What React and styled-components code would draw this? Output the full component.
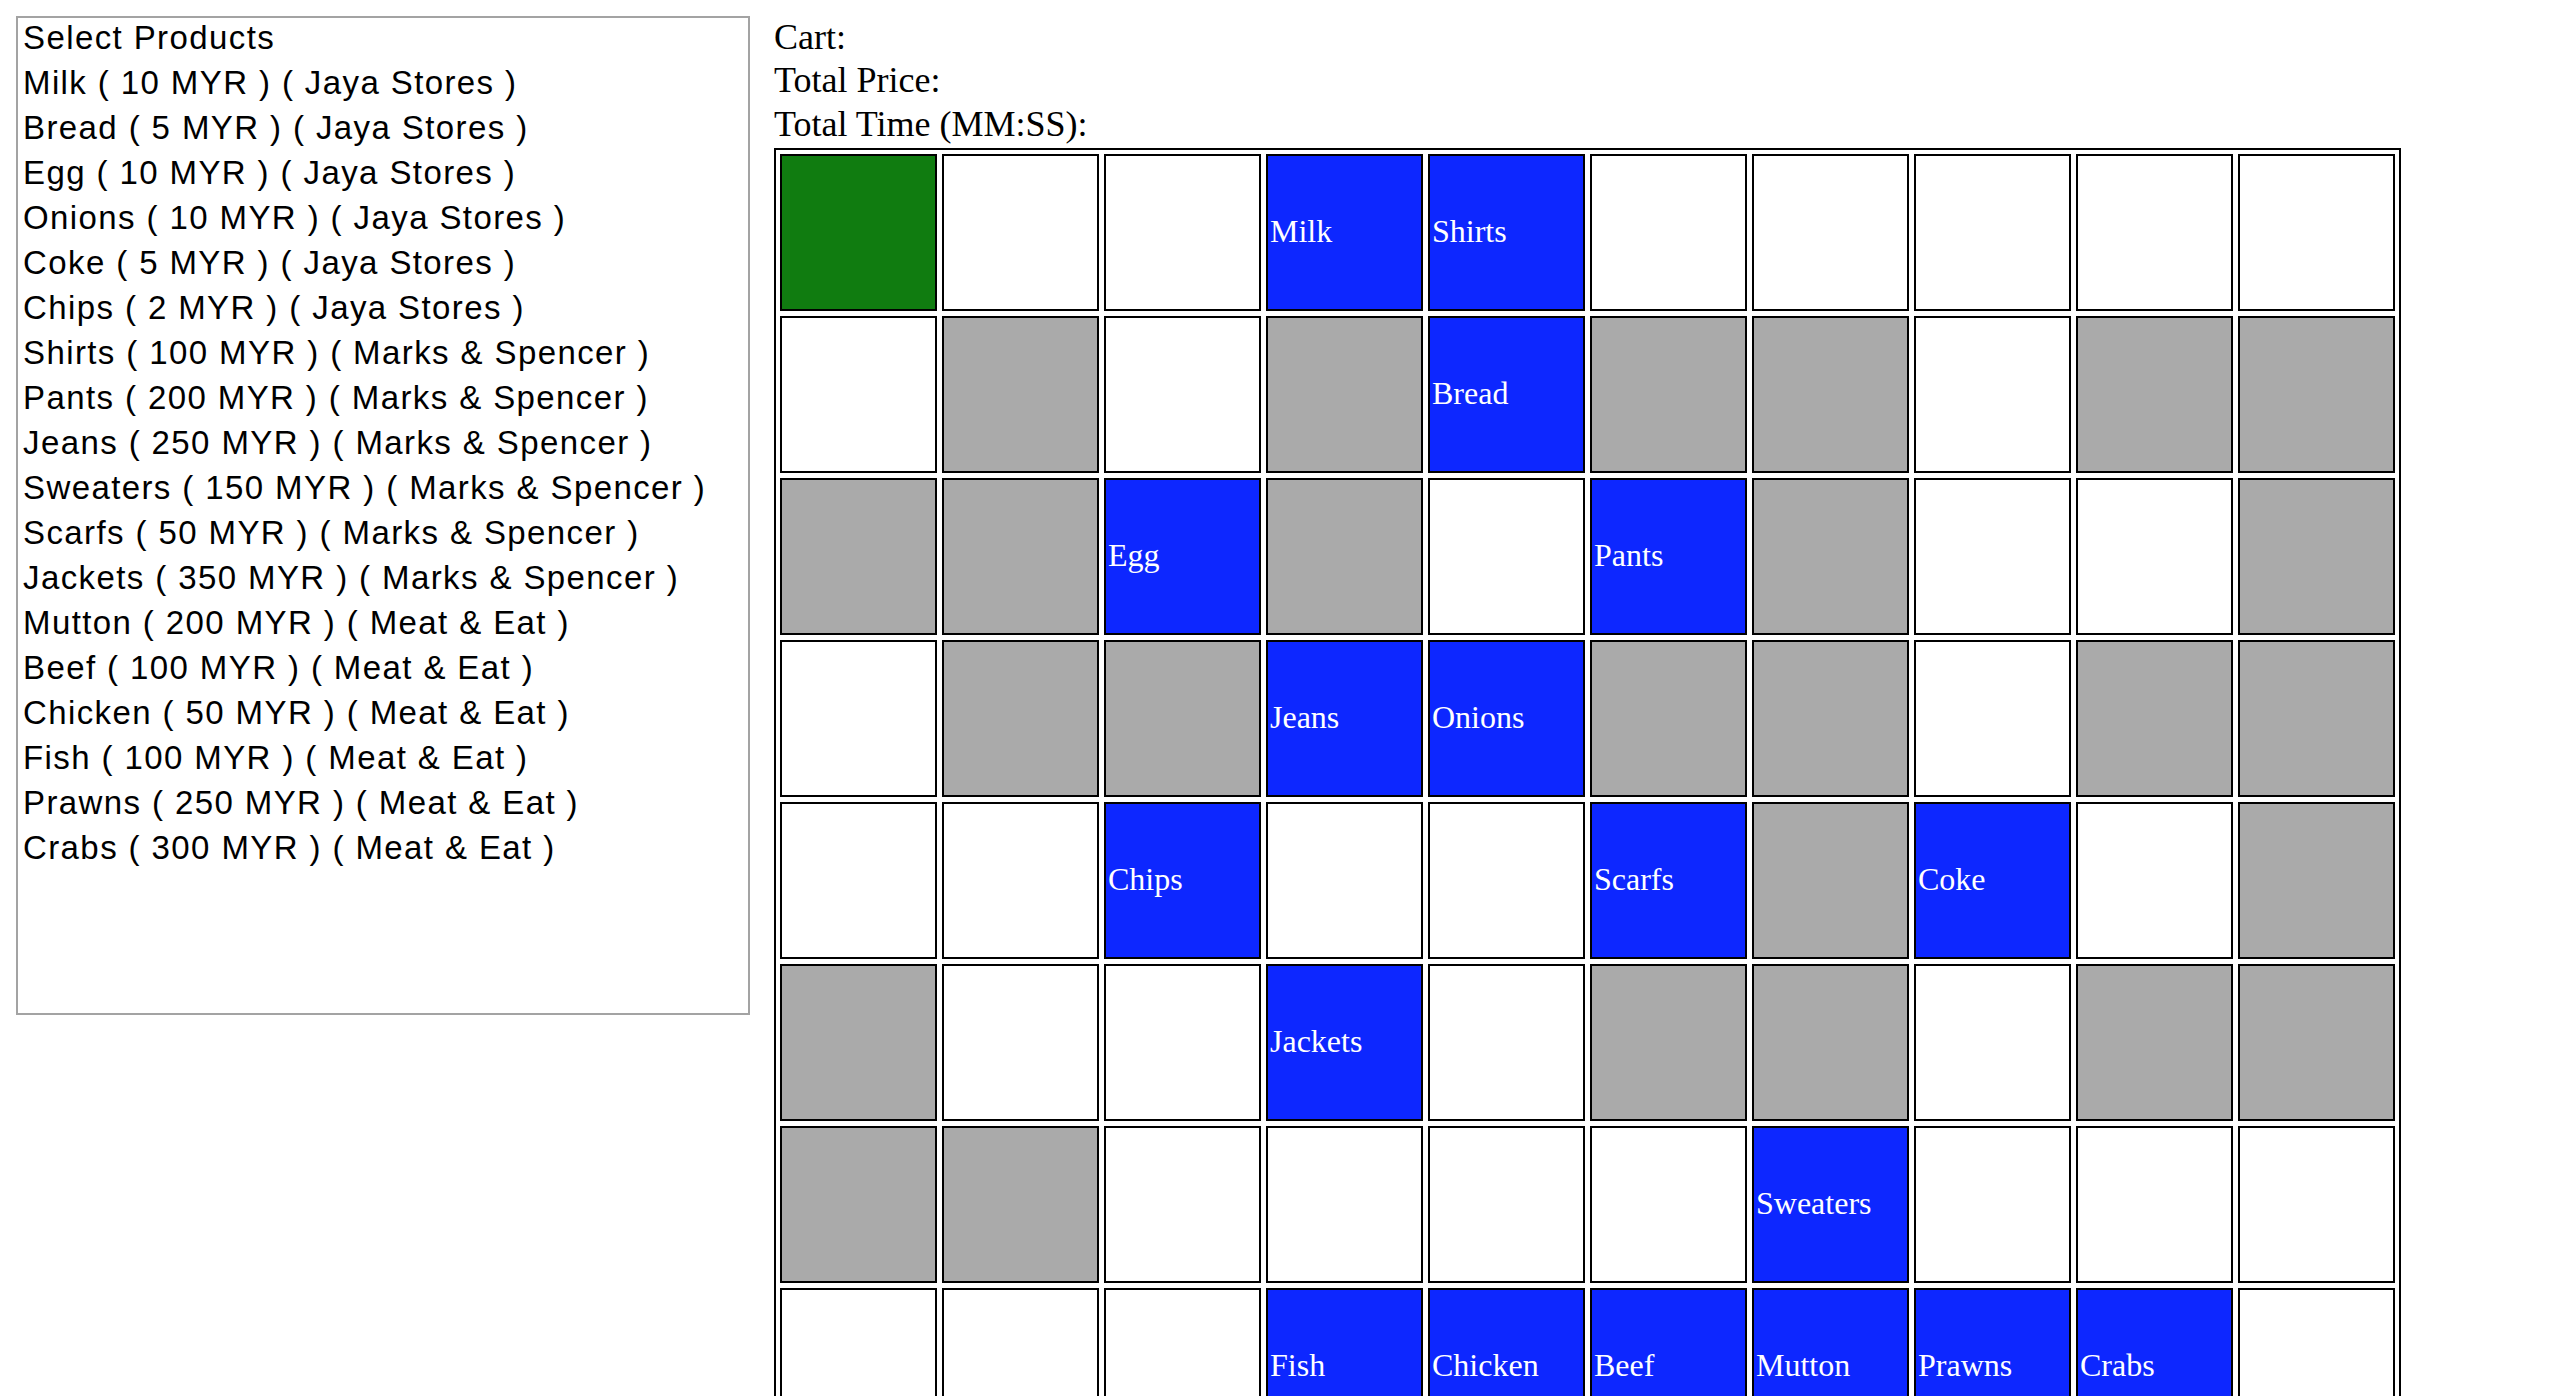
import React from 'react'
import styled, { createGlobalStyle } from 'styled-components'

const GlobalStyle = createGlobalStyle`
html {
    scrollbar-width: none;
}
html::-webkit-scrollbar {
    display: none;
}
body {
    margin: 0;
    background: #fff;
    color: #000;
}
`;

const Page = styled.div`
display: flex;
align-items: flex-start;
gap: 24px;
padding: 16px 0 0 16px;
`;

const ProductList = styled.div`
box-sizing: border-box;
width: 734px;
height: 999px;
flex-shrink: 0;
border: 2px solid #a3a3a3;
padding: 0 5px;
font-family: "Liberation Sans", Arial, sans-serif;
font-size: 33px;
letter-spacing: 1.4px;
overflow: hidden;
`;

const Option = styled.div`
height: 45px;
line-height: 40px;
white-space: nowrap;
`;

const Side = styled.div`
display: flex;
flex-direction: column;
`;

const InfoLine = styled.div`
font-family: "Liberation Serif", "Times New Roman", serif;
font-size: 36px;
line-height: 43.4px;
white-space: nowrap;
`;

const Board = styled.div`
display: grid;
grid-template-columns: repeat(10, 157px);
grid-auto-rows: 157px;
gap: 5px;
padding: 4px;
margin-top: 2px;
border: 2px solid #000;
`;

const cellColors = {
    start: '#107c10',
    empty: '#ffffff',
    wall: '#aaaaaa',
    product: '#0d27ff',
};

const Cell = styled.div`
box-sizing: border-box;
display: flex;
align-items: center;
padding: 0 2px 3px;
border: 2px solid #000;
background: ${props => cellColors[props.kind]};
color: #fff;
font-family: "Liberation Serif", "Times New Roman", serif;
font-size: 32px;
white-space: nowrap;
overflow: hidden;
`;

const products = [
    'Select Products',
    'Milk ( 10 MYR ) ( Jaya Stores )',
    'Bread ( 5 MYR ) ( Jaya Stores )',
    'Egg ( 10 MYR ) ( Jaya Stores )',
    'Onions ( 10 MYR ) ( Jaya Stores )',
    'Coke ( 5 MYR ) ( Jaya Stores )',
    'Chips ( 2 MYR ) ( Jaya Stores )',
    'Shirts ( 100 MYR ) ( Marks & Spencer )',
    'Pants ( 200 MYR ) ( Marks & Spencer )',
    'Jeans ( 250 MYR ) ( Marks & Spencer )',
    'Sweaters ( 150 MYR ) ( Marks & Spencer )',
    'Scarfs ( 50 MYR ) ( Marks & Spencer )',
    'Jackets ( 350 MYR ) ( Marks & Spencer )',
    'Mutton ( 200 MYR ) ( Meat & Eat )',
    'Beef ( 100 MYR ) ( Meat & Eat )',
    'Chicken ( 50 MYR ) ( Meat & Eat )',
    'Fish ( 100 MYR ) ( Meat & Eat )',
    'Prawns ( 250 MYR ) ( Meat & Eat )',
    'Crabs ( 300 MYR ) ( Meat & Eat )',
];

// S = start, . = empty, # = wall, anything else is a product
const map = [
    ['S', '.', '.', 'Milk', 'Shirts', '.', '.', '.', '.', '.'],
    ['.', '#', '.', '#', 'Bread', '#', '#', '.', '#', '#'],
    ['#', '#', 'Egg', '#', '.', 'Pants', '#', '.', '.', '#'],
    ['.', '#', '#', 'Jeans', 'Onions', '#', '#', '.', '#', '#'],
    ['.', '.', 'Chips', '.', '.', 'Scarfs', '#', 'Coke', '.', '#'],
    ['#', '.', '.', 'Jackets', '.', '#', '#', '.', '#', '#'],
    ['#', '#', '.', '.', '.', '.', 'Sweaters', '.', '.', '.'],
    ['.', '.', '.', 'Fish', 'Chicken', 'Beef', 'Mutton', 'Prawns', 'Crabs', '.'],
];

const kindOf = (v) => {
    if (v === 'S') return 'start';
    if (v === '.') return 'empty';
    if (v === '#') return 'wall';
    return 'product';
};

export default function App() {
    return (
        <>
            <GlobalStyle />
            <Page>
                <ProductList>
                    {products.map((p) => (
                        <Option key={p}>{p}</Option>
                    ))}
                </ProductList>
                <Side>
                    <InfoLine>Cart:</InfoLine>
                    <InfoLine>Total Price:</InfoLine>
                    <InfoLine>Total Time (MM:SS):</InfoLine>
                    <Board>
                        {map.map((row, r) =>
                            row.map((v, c) => {
                                const kind = kindOf(v);
                                return (
                                    <Cell key={r + '-' + c} kind={kind}>
                                        {kind === 'product' ? v : ''}
                                    </Cell>
                                );
                            })
                        )}
                    </Board>
                </Side>
            </Page>
        </>
    );
}
